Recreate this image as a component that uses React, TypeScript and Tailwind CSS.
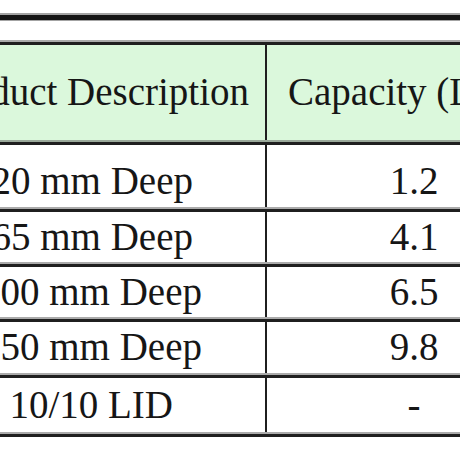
import React from 'react';

type Row = {
  desc: string;
  cap: string;
  height: string;
  pad: string;
  top: string;
};

// rows of the pan table; the description column runs off the left edge
const rows: Row[] = [
  { desc: '20 mm Deep', cap: '1.2', height: 'h-[62px]', pad: 'pr-[72px]', top: 'pt-[11px]' },
  { desc: '65 mm Deep', cap: '4.1', height: 'h-[50px]', pad: 'pr-[72px]', top: '' },
  { desc: '100 mm Deep', cap: '6.5', height: 'h-[50px]', pad: 'pr-[63px]', top: '' },
  { desc: '150 mm Deep', cap: '9.8', height: 'h-[51px]', pad: 'pr-[63px]', top: '' },
  { desc: '10/10 LID', cap: '-', height: 'h-[54px]', pad: 'pr-[92px]', top: '' },
];

const Sep = ({ green = false }: { green?: boolean }) => (
  <div
    className={
      green
        ? 'h-[5px] border-t-2 border-[#9aa99a] bg-[#1f1f1f]'
        : 'h-[5px] border-t-2 border-[#ababab] bg-[#1f1f1f]'
    }
  />
);

const App = () => {
  return (
    <div className="w-[460px] h-[460px] overflow-hidden bg-white font-['Liberation_Serif',serif] text-[39px] text-[#161616]">
      <div className="mt-[13px] h-[8px] border-t-2 border-b border-[#a3a3a3] bg-[#141414]" />

      <div className="mt-[19px] -ml-[100px] w-[661px]">
        <Sep />
        <div className="flex h-[95px] bg-[#dbf8dc]">
          <div className="w-[367px] border-r-2 border-[#1f1f1f] flex items-center justify-end pr-[16px] whitespace-nowrap">
            Product Description
          </div>
          <div className="flex-1 flex items-center pl-[21px] whitespace-nowrap">Capacity (L)</div>
        </div>
        <Sep green />

        {rows.map((r) => (
          <div key={r.desc}>
            <div className={`flex ${r.height}`}>
              <div
                className={`w-[367px] border-r-2 border-[#1f1f1f] flex items-center justify-end whitespace-nowrap ${r.pad} ${r.top}`}
              >
                {r.desc}
              </div>
              <div className={`flex-1 flex items-center justify-center ${r.top}`}>{r.cap}</div>
            </div>
            <Sep />
          </div>
        ))}
      </div>
    </div>
  );
};

export default App;
